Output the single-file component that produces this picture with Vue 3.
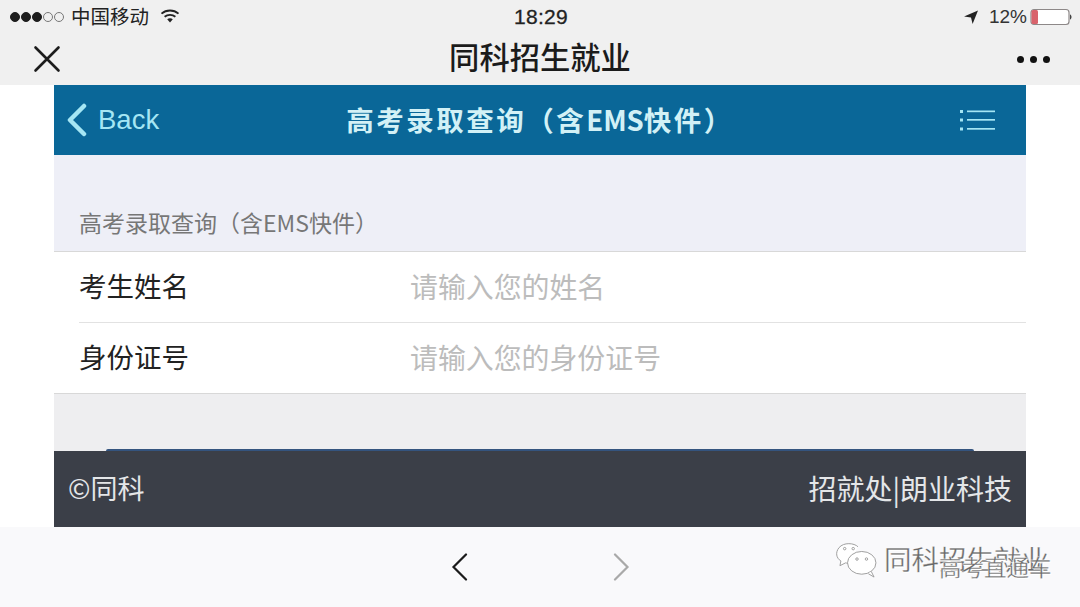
<script setup>
const rows = [
  { label: '考生姓名', hint: '请输入您的姓名' },
  { label: '身份证号', hint: '请输入您的身份证号' },
]
</script>

<template>
  <div class="screen">
    <header class="chrome">
      <div class="status">
        <div class="status-left">
          <span class="signal"><i class="on"></i><i class="on"></i><i class="on"></i><i></i><i></i></span>
          <span class="carrier">中国移动</span>
          <svg class="wifi" width="20" height="16" viewBox="0 0 20 16">
            <path d="M1.5 5.6C6.3 1.4 13.7 1.4 18.5 5.6" fill="none" stroke="#222" stroke-width="1.9" />
            <path d="M4.6 8.7C7.7 6.2 12.3 6.2 15.4 8.7" fill="none" stroke="#222" stroke-width="1.9" />
            <path d="M7.2 11.3C8.8 10 11.2 10 12.8 11.3L10 14.4Z" fill="#222" />
          </svg>
        </div>
        <div class="clock">18:29</div>
        <div class="status-right">
          <svg class="arrow" width="16" height="16" viewBox="0 0 16 16"><path d="M15 1.5L1 7.6L8 8.4L9.6 15Z" fill="#222" /></svg>
          <span class="percent">12%</span>
          <svg class="battery" width="42" height="18" viewBox="0 0 42 18">
            <rect x="1" y="1.5" width="38" height="15" rx="3" fill="#fff" stroke="#8d8888" stroke-width="1.2" />
            <rect x="1.500" y="2" width="6.500" height="14" rx="1.5" fill="#d9636c" />
            <path d="M40 6.500C42 7 42 11 40 11.500Z" fill="#444" />
          </svg>
        </div>
      </div>
      <div class="titlebar">
        <svg class="close" width="28" height="28" viewBox="0 0 28 28">
          <path d="M2.500 2.500L25.500 25.500M25.500 2.500L2.500 25.500" stroke="#1c1c1c" stroke-width="2.600" stroke-linecap="round" />
        </svg>
        <h1>同科招生就业</h1>
        <div class="more"><i></i><i></i><i></i></div>
      </div>
    </header>

    <main class="stage">
      <div class="page">
        <div class="nav">
          <div class="back">
            <svg width="22" height="34" viewBox="0 0 22 34"><path d="M18 3L4 17L18 31" fill="none" stroke="#a5e6f4" stroke-width="4.500" stroke-linecap="round" stroke-linejoin="round" /></svg>
            <span>Back</span>
          </div>
          <div class="nav-title">高考录取查询（含<span class="latin">EMS</span>快件）</div>
          <svg class="menu" width="35" height="24" viewBox="0 0 35 24">
            <g fill="#a5e6f4">
              <rect x="0" y="2" width="3" height="3" /><rect x="0" y="10.500" width="3" height="3" /><rect x="0" y="19.500" width="3" height="3" />
              <rect x="7" y="2.500" width="28" height="1.700" /><rect x="7" y="11" width="28" height="1.700" /><rect x="7" y="20" width="28" height="1.700" />
            </g>
          </svg>
        </div>
        <div class="section">高考录取查询（含EMS快件）</div>
        <div class="form">
          <div v-for="row in rows" :key="row.label" class="row">
            <span class="label">{{ row.label }}</span>
            <span class="hint">{{ row.hint }}</span>
          </div>
        </div>
        <div class="gap"><div class="peek"></div></div>
        <div class="footer">
          <span class="copy">©同科</span>
          <span class="org">招就处|朗业科技</span>
        </div>
      </div>
    </main>

    <footer class="toolbar">
      <svg width="18" height="28" viewBox="0 0 18 28"><path d="M15 1.500L2.500 14L15 26.500" fill="none" stroke="#1b1b1b" stroke-width="2.200" stroke-linecap="round" /></svg>
      <svg width="18" height="28" viewBox="0 0 18 28"><path d="M3 1.500L15.500 14L3 26.500" fill="none" stroke="#a9a9a9" stroke-width="2.200" stroke-linecap="round" /></svg>
    </footer>

    <div class="watermark">
      <svg width="44" height="36" viewBox="0 0 46 38" fill="none" stroke="#9a9a9a" stroke-width="1">
        <path d="M24 5C20 1 9 0 4 6C0 11 1 17 6 20L5 25L11 22C12 22 13 23 15 23" fill="#fff" />
        <ellipse cx="28" cy="22" rx="15" ry="12" fill="#fff" />
        <path d="M38 31L41 37L35 33.500" fill="#fff" />
        <circle cx="10" cy="7" r="1.300" /><circle cx="19" cy="7" r="1.300" />
        <circle cx="23" cy="18" r="1.300" /><circle cx="33" cy="18" r="1.300" />
      </svg>
      <span class="mark-a">同科招生就业</span>
      <span class="mark-b">高考直通车</span>
    </div>
  </div>
</template>

<style scoped>
.screen {
  position: relative;
  width: 1080px;
  height: 607px;
  overflow: hidden;
  display: flex;
  flex-direction: column;
  background: #fff;
  font-family: "Noto Sans CJK SC", "Liberation Sans", sans-serif;
}
.chrome {
  height: 85px;
  flex: none;
  background: #f0f0f0;
  display: flex;
  flex-direction: column;
}
.status {
  height: 33px;
  padding: 0 8px 0 10px;
  display: grid;
  grid-template-columns: 1fr auto 1fr;
  align-items: center;
  color: #222;
}
.status-left { display: flex; align-items: center; }
.signal { display: flex; gap: 1px; }
.signal i {
  width: 10px;
  height: 10px;
  border-radius: 50%;
  border: 1px solid #777;
  box-sizing: border-box;
}
.signal i.on { background: #1d1d1d; border-color: #1d1d1d; }
.carrier { margin-left: 7px; margin-bottom: 2px; font-size: 19.500px; line-height: 24px; }
.wifi { margin-left: 11px; margin-bottom: 2px; }
.clock {
  font-size: 21px;
  font-family: "Liberation Sans", sans-serif;
  letter-spacing: 0.300px;
  -webkit-text-stroke: 0.300px #222;
}
.status-right { display: flex; align-items: center; justify-content: flex-end; }
.percent { margin-left: 10px; font-size: 19px; font-family: "Liberation Sans", sans-serif; color: #333; }
.battery { margin-left: 3px; }
.titlebar {
  flex: 1;
  padding: 0 14px 4px 33px;
  display: flex;
  align-items: center;
  justify-content: space-between;
  position: relative;
}
.titlebar .close { margin-top: 4px; }
.titlebar h1 {
  position: absolute;
  left: 0;
  right: 0;
  top: 3px;
  margin: 0;
  text-align: center;
  font-size: 30.300px;
  line-height: 40px;
  font-weight: 500;
  color: #1b1b1b;
}
.more { display: flex; gap: 6px; margin-right: 16px; margin-top: 4px; }
.more i { width: 7px; height: 7px; border-radius: 50%; background: #111; }
.stage { flex: 1; display: flex; justify-content: center; min-height: 0; }
.page { width: 972px; display: flex; flex-direction: column; background: #eeeef2; }
.nav {
  height: 70px;
  flex: none;
  background: #0a6798;
  display: flex;
  align-items: center;
  justify-content: space-between;
  padding: 0 31px 0 12px;
  position: relative;
}
.back { display: flex; align-items: center; gap: 10px; color: #a5e6f4; font-size: 27.500px; font-family: "Liberation Sans", sans-serif; }
.nav-title {
  position: absolute;
  left: 0;
  right: 0;
  top: 16px;
  text-align: center;
  color: #d2f1f6;
  font-size: 27.500px;
  line-height: 36px;
  font-weight: 700;
  letter-spacing: 2.500px;
}
.latin { letter-spacing: 0; }
.section {
  height: 97px;
  flex: none;
  box-sizing: border-box;
  background: #eeeff7;
  padding: 51px 0 0 25px;
  color: #777;
  font-size: 23px;
  line-height: 32px;
  border-bottom: 1px solid #d8d8d8;
}
.form { background: #fff; padding-left: 25px; border-bottom: 1px solid #d8d8d8; flex: none; }
.row {
  height: 70px;
  box-sizing: border-box;
  padding-bottom: 2px;
  display: flex;
  align-items: center;
}
.row + .row { height: 71px; border-top: 1px solid #e2e2e2; }
.label { width: 331px; font-size: 27.500px; color: #222; margin-bottom: 2px; }
.hint { font-size: 27.900px; color: #bcbcbc; }
.gap {
  flex: 1;
  background: #eeeef0;
  display: flex;
  flex-direction: column;
  justify-content: flex-end;
}
.peek {
  height: 2px;
  margin: 0 52px;
  background: #34547f;
  border-radius: 2px 2px 0 0;
}
.footer {
  height: 76px;
  flex: none;
  background: #3b3f48;
  box-sizing: border-box;
  display: flex;
  align-items: center;
  justify-content: space-between;
  padding: 0 14px 3px;
  color: #e4e6e8;
}
.copy { font-size: 27px; }
.org { font-size: 28px; }
.toolbar {
  height: 80px;
  flex: none;
  background: #f9f9fb;
  display: flex;
  align-items: center;
  justify-content: center;
  gap: 143px;
}
.watermark {
  position: absolute;
  left: 835px;
  top: 540px;
  width: 230px;
  height: 50px;
  color: #666;
}
.watermark svg { position: absolute; left: 0; top: 2px; }
.mark-a, .mark-b {
  position: absolute;
  white-space: nowrap;
  line-height: 32px;
  color: #6a6a6a;
  -webkit-text-stroke: 0.300px #fff;
  text-shadow: 1px 1px 0 #fff;
}
.mark-a { left: 49px; top: 2px; font-size: 27.500px; }
.mark-b { left: 104px; top: 10px; font-size: 22.500px; }
</style>
